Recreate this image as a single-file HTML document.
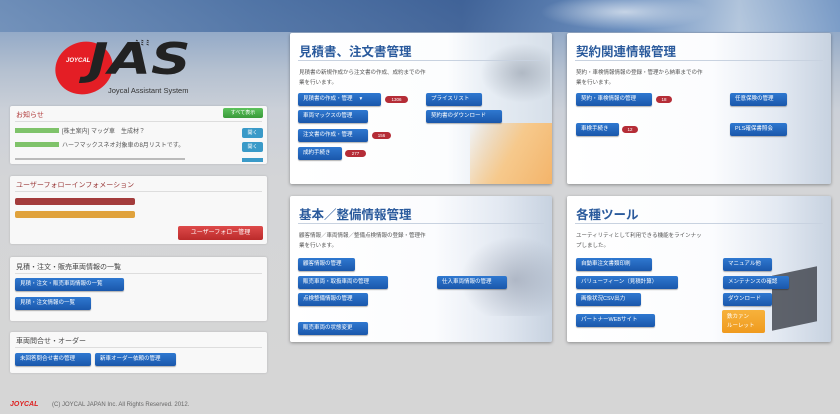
<!DOCTYPE html>
<html><head><meta charset="utf-8"><style>
*{margin:0;padding:0;box-sizing:border-box}
body{width:840px;height:414px;overflow:hidden;position:relative;font-family:"Liberation Sans","Noto Sans CJK JP",sans-serif;
background:linear-gradient(180deg,#5f80ad 0px,#8ea6c6 25px,#b4c0d0 70px,#cbd0d8 110px,#d4d5d7 180px,#d6d6d6 414px)}
.a{position:absolute}
.top{left:0;top:0;width:840px;height:32px;background:linear-gradient(90deg,#6f8fb9 0%,#4f73a5 30%,#3c5f95 55%,#6a8fc0 75%,#b9cbe0 88%,#7a9cc8 100%);opacity:.9}
.p{background:#f8f8f8;border-radius:2px;box-shadow:0 0 2px rgba(0,0,0,.15)}
.ph{font-size:7px;color:#444;position:absolute;left:6px}
.line{position:absolute;left:5px;right:5px;height:1px;background:#ddd}
.b{position:absolute;height:13px;background:linear-gradient(#2f78d0,#1a57ab);border-radius:2px;color:#fff;font-size:5.5px;line-height:13px;padding-left:5px;white-space:nowrap;overflow:hidden;box-shadow:0 1px 1px rgba(0,0,0,.3)}
.bd{position:absolute;height:7px;background:#b52d37;border-radius:4px;color:#fff;font-size:4.5px;line-height:7px;text-align:center}
.c{background:linear-gradient(90deg,#fff 0%,#fbfcfe 55%,#e3e9f2 80%,#c7d2e0 100%);border-radius:2px;box-shadow:0 1px 3px rgba(0,0,0,.35)}
.ct{position:absolute;left:9px;top:8px;font-size:12.5px;font-weight:bold;color:#2a5a9c}
.cl{position:absolute;left:8px;right:8px;top:27px;height:1px;background:#c8d2e0}
.cd{position:absolute;left:9px;top:35px;font-size:5.5px;line-height:10px;color:#555;width:128px}
</style></head><body>
<div class="a top"></div>
<div class="a" style="left:540px;top:0;width:170px;height:30px;background:radial-gradient(ellipse at 50% 40%,#c6d4e6 0%,rgba(198,212,230,0) 70%)"></div>

<!-- logo -->
<div class="a" style="left:55px;top:42px;width:58px;height:52px;border-radius:50%;background:#e41e25;transform:rotate(-20deg)"></div>
<div class="a" style="left:66px;top:58px;font-size:6px;font-weight:bold;color:#fff;font-style:italic">JOYCAL</div>
<div class="a" style="left:88px;top:36px;font-size:44px;font-weight:900;font-style:italic;color:#222;line-height:48px;font-family:'DejaVu Sans',sans-serif;transform-origin:0 0;transform:scaleX(1.25)">JAS</div>
<div class="a" style="left:135px;top:38px;font-size:7px;color:#222;font-weight:bold">ﾐ ﾐ ﾐ</div>
<div class="a" style="left:108px;top:86px;font-size:7.5px;color:#333">Joycal Assistant System</div>

<!-- left panels -->
<div class="a p" style="left:10px;top:106px;width:257px;height:58px">
 <div class="ph" style="top:4px;color:#b03a3a">お知らせ</div>
 <div class="a" style="left:213px;top:2px;width:40px;height:10px;background:linear-gradient(#5cc25c,#3a9a3a);border-radius:2px;color:#fff;font-size:5px;line-height:10px;text-align:center">すべて表示</div>
 <div class="line" style="top:15px"></div>
 <div class="a" style="left:5px;top:22px;width:44px;height:5px;background:#7fc36a"></div>
 <div class="a" style="left:52px;top:20px;font-size:6px;color:#555">[株主案内] マッグ車　生成材？</div>
 <div class="a" style="left:232px;top:22px;width:21px;height:10px;background:#3a9ac8;border-radius:2px;color:#fff;font-size:5px;line-height:10px;text-align:center">開く</div>
 <div class="a" style="left:5px;top:36px;width:44px;height:5px;background:#7fc36a"></div>
 <div class="a" style="left:52px;top:34px;font-size:6px;color:#555">ハーフマックスネオ対象車の8月リストです。</div>
 <div class="a" style="left:232px;top:36px;width:21px;height:10px;background:#3a9ac8;border-radius:2px;color:#fff;font-size:5px;line-height:10px;text-align:center">開く</div>
 <div class="a" style="left:5px;top:52px;width:170px;height:2px;background:#bbb"></div>
 <div class="a" style="left:232px;top:52px;width:21px;height:4px;background:#3a9ac8"></div>
</div>
<div class="a p" style="left:10px;top:176px;width:257px;height:68px">
 <div class="ph" style="top:4px;color:#9a3838">ユーザーフォローインフォメーション</div>
 <div class="line" style="top:15px"></div>
 <div class="a" style="left:5px;top:22px;width:120px;height:7px;background:#a33c3c;border-radius:2px"></div>
 <div class="a" style="left:5px;top:35px;width:120px;height:7px;background:#e0a23c;border-radius:2px"></div>
 <div class="a" style="left:168px;top:50px;width:85px;height:14px;background:linear-gradient(#de4a4a,#bb2b2b);border-radius:2px;color:#fff;font-size:6px;line-height:14px;text-align:center">ユーザーフォロー管理</div>
</div>
<div class="a p" style="left:10px;top:257px;width:257px;height:64px">
 <div class="ph" style="top:5px">見積・注文・販売車両情報の一覧</div>
 <div class="line" style="top:16px"></div>
 <div class="b" style="left:5px;top:21px;width:109px">見積・注文・販売車両情報の一覧</div>
 <div class="b" style="left:5px;top:40px;width:76px">見積・注文情報の一覧</div>
</div>
<div class="a p" style="left:10px;top:332px;width:257px;height:41px">
 <div class="ph" style="top:4px">車両問合せ・オーダー</div>
 <div class="line" style="top:15px"></div>
 <div class="b" style="left:5px;top:21px;width:76px">未回答問合せ書の管理</div>
 <div class="b" style="left:85px;top:21px;width:81px">新車オーダー依頼の管理</div>
</div>
<div class="a" style="left:10px;top:401px;font-size:7px;font-weight:bold;font-style:italic;color:#d22">JOYCAL</div>
<div class="a" style="left:52px;top:402px;font-size:6px;color:#666">(C) JOYCAL JAPAN Inc. All Rights Reserved. 2012.</div>

<!-- card 1 -->
<div class="a c" style="left:290px;top:33px;width:262px;height:151px;background:linear-gradient(90deg,#fff 0%,#fcfdfe 60%,#e8eef5 75%,#d6dfe9 100%)">
 <div class="a" style="left:180px;top:90px;width:82px;height:61px;background:linear-gradient(120deg,rgba(255,255,255,0),#f6c98c 50%,#f3b46a)"></div>
 <div class="a" style="left:190px;top:10px;width:70px;height:60px;background:radial-gradient(ellipse at 60% 50%,rgba(120,130,145,.45),rgba(255,255,255,0) 70%)"></div>
 <div class="ct">見積書、注文書管理</div><div class="cl"></div>
 <div class="cd">見積書の新規作成から注文書の作成、成約までの作業を行います。</div>
 <div class="b" style="left:8px;top:60px;width:83px">見積書の作成・管理　 ▾</div><div class="bd" style="left:95px;top:63px;width:23px">1306</div>
 <div class="b" style="left:136px;top:60px;width:56px">プライスリスト</div>
 <div class="b" style="left:8px;top:77px;width:70px">車両マックスの管理</div>
 <div class="b" style="left:136px;top:77px;width:76px">契約書のダウンロード</div>
 <div class="b" style="left:8px;top:96px;width:70px">注文書の作成・管理</div><div class="bd" style="left:82px;top:99px;width:19px">156</div>
 <div class="b" style="left:8px;top:114px;width:44px">成約手続き</div><div class="bd" style="left:55px;top:117px;width:21px">277</div>
</div>
<!-- card 2 -->
<div class="a c" style="left:567px;top:33px;width:264px;height:151px">
 <div class="ct">契約関連情報管理</div><div class="cl"></div>
 <div class="cd">契約・車検情報情報の登録・管理から納車までの作業を行います。</div>
 <div class="b" style="left:9px;top:60px;width:76px">契約・車検情報の管理</div><div class="bd" style="left:89px;top:63px;width:16px">18</div>
 <div class="b" style="left:163px;top:60px;width:57px">任意保険の管理</div>
 <div class="b" style="left:9px;top:90px;width:43px">車検手続き</div><div class="bd" style="left:55px;top:93px;width:16px">12</div>
 <div class="b" style="left:163px;top:90px;width:57px">PLS確保書照会</div>
</div>
<!-- card 3 -->
<div class="a c" style="left:290px;top:196px;width:262px;height:146px">
 <div class="a" style="left:170px;top:40px;width:92px;height:80px;background:radial-gradient(ellipse at 60% 55%,rgba(110,120,140,.4),rgba(255,255,255,0) 70%)"></div>
 <div class="ct">基本／整備情報管理</div><div class="cl"></div>
 <div class="cd">顧客情報／車両情報／整備点検情報の登録・管理作業を行います。</div>
 <div class="b" style="left:8px;top:62px;width:57px">顧客情報の管理</div>
 <div class="b" style="left:8px;top:80px;width:90px">販売車両・取扱車両の管理</div>
 <div class="b" style="left:147px;top:80px;width:70px">仕入車両情報の管理</div>
 <div class="b" style="left:8px;top:97px;width:70px">点検整備情報の管理</div>
 <div class="b" style="left:8px;top:126px;width:70px">販売車両の状態変更</div>
</div>
<!-- card 4 -->
<div class="a c" style="left:567px;top:196px;width:264px;height:146px">
 <div class="a" style="left:205px;top:75px;width:45px;height:55px;background:#3c4048;transform:skewY(-12deg);opacity:.8"></div>
 <div class="ct">各種ツール</div><div class="cl"></div>
 <div class="cd">ユーティリティとして利用できる機能をラインナップしました。</div>
 <div class="b" style="left:9px;top:62px;width:76px">自動車注文書類印刷</div>
 <div class="b" style="left:9px;top:80px;width:102px">バリューフィーン（見積計算）</div>
 <div class="b" style="left:9px;top:97px;width:65px">画像状況CSV出力</div>
 <div class="b" style="left:9px;top:118px;width:79px">パートナーWEBサイト</div>
 <div class="b" style="left:156px;top:62px;width:49px">マニュアル他</div>
 <div class="b" style="left:156px;top:80px;width:66px">メンテナンスの確認</div>
 <div class="b" style="left:156px;top:97px;width:49px">ダウンロード</div>
 <div class="a" style="left:155px;top:114px;width:43px;height:23px;background:linear-gradient(#f7b23c,#ef9a1e);border-radius:2px;color:#fff;font-size:5.5px;line-height:9px;padding:3px 5px">鉄カァン<br>ルーレット</div>
</div>
</body></html>
